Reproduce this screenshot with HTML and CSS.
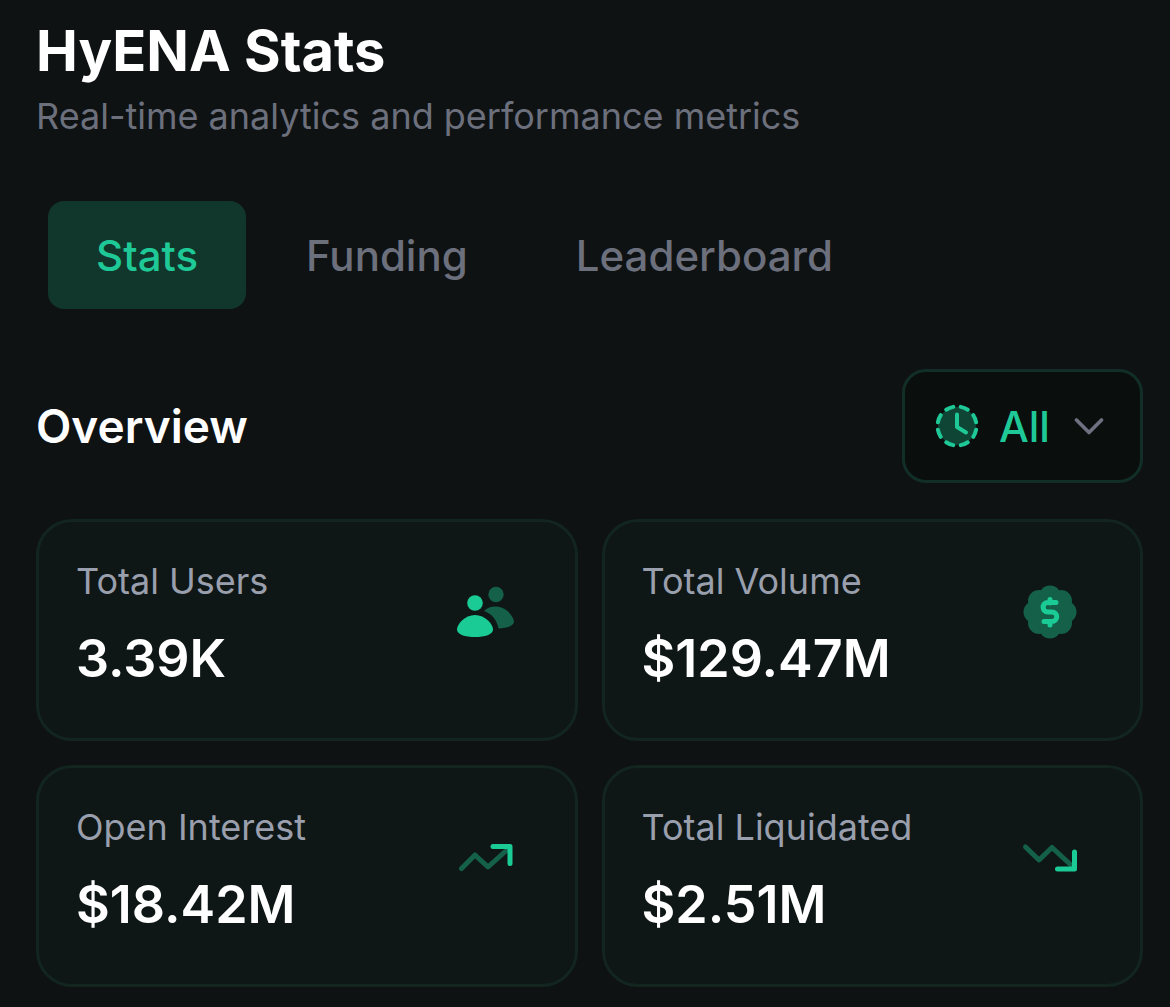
FILE: index.html
```html
<!DOCTYPE html>
<html lang="en">
  <head>
    <meta charset="UTF-8" />
    <meta name="viewport" content="width=device-width, initial-scale=1.0" />
    <title>HyENA Stats</title>
    <link rel="stylesheet" href="styles.css">
  </head>
  <body>
    <header class="page-header">
      <h1>HyENA Stats</h1>
      <p>Real-time analytics and performance metrics</p>
    </header>

    <nav class="tabs">
      <button class="tab active" type="button">Stats</button>
      <button class="tab" type="button">Funding</button>
      <button class="tab" type="button">Leaderboard</button>
    </nav>

    <main>
      <div class="section-header">
        <h2>Overview</h2>
        <label class="period">
          <svg class="period-icon" viewBox="0 0 44 44" aria-hidden="true">
            <circle cx="22" cy="22" r="19" fill="#0e4534" />
            <circle
              cx="22" cy="22" r="19.5" fill="none" stroke="#1fc997" stroke-width="4"
              stroke-linecap="round" pathLength="80" stroke-dasharray="5 5" stroke-dashoffset="-2.5"
            />
            <path d="M22 10.5V23l9 5.500" fill="none" stroke="#1fc997" stroke-width="4" stroke-linecap="round" stroke-linejoin="round" />
          </svg>
          <select aria-label="Time period">
            <option>All</option>
          </select>
          <svg class="period-arrow" viewBox="0 0 30 18" aria-hidden="true">
            <path d="M2.500 3l12.500 12.500L27.500 3" fill="none" stroke="#6f7180" stroke-width="3.600" stroke-linecap="round" stroke-linejoin="round" />
          </svg>
        </label>
      </div>

      <div class="cards">
        <div class="card">
          <div>
            <div class="card-label">Total Users</div>
            <div class="card-value">3.39K</div>
          </div>
          <svg class="card-icon" viewBox="0 0 60 60" aria-hidden="true">
            <circle cx="41" cy="14.500" r="7.700" fill="#146049" />
            <path d="M29 31C35 25 46 25 53 31.500C57 35.500 59 39.500 59 42C58 46.500 51 48.500 43.500 48.500C42 40.500 37 33.500 29 31Z" fill="#146049" />
            <circle cx="20" cy="23" r="7.800" fill="#1bcb95" />
            <path d="M20 35C30 35 38 44 38 49.500C38 54.500 30 57 20 57S2 54.500 2 49.500C2 44 10 35 20 35Z" fill="#1bcb95" />
          </svg>
        </div>

        <div class="card">
          <div>
            <div class="card-label">Total Volume</div>
            <div class="card-value">$129.47M</div>
          </div>
          <svg class="card-icon" viewBox="0 0 60 60" aria-hidden="true">
            <g fill="#146049">
              <circle cx="30" cy="32" r="21" />
              <circle cx="30" cy="16.500" r="11" />
              <circle cx="41" cy="21" r="11" />
              <circle cx="45.500" cy="32" r="11" />
              <circle cx="41" cy="43" r="11" />
              <circle cx="30" cy="47.500" r="11" />
              <circle cx="19" cy="43" r="11" />
              <circle cx="14.500" cy="32" r="11" />
              <circle cx="19" cy="21" r="11" />
            </g>
            <path
              d="M30 19.500V23M30 41.500V45M36 22.500H28C21.500 22.500 21.500 32 28 32H31.500C38.500 32 38.500 41.500 31.500 41.500H24"
              fill="none" stroke="#1bcb95" stroke-width="5" stroke-linecap="round" stroke-linejoin="round"
            />
          </svg>
        </div>

        <div class="card">
          <div>
            <div class="card-label">Open Interest</div>
            <div class="card-value">$18.42M</div>
          </div>
          <svg class="card-icon" viewBox="0 0 60 60" fill="none" stroke-width="5" stroke-linecap="round" stroke-linejoin="round" aria-hidden="true">
            <path d="M6.500 42.500L20 29L33 41L53 23" stroke="#146049" />
            <path d="M38 20.500H55V37.500" stroke="#1bcb95" />
          </svg>
        </div>

        <div class="card">
          <div>
            <div class="card-label">Total Liquidated</div>
            <div class="card-value">$2.51M</div>
          </div>
          <svg class="card-icon" viewBox="0 0 60 60" fill="none" stroke-width="5" stroke-linecap="round" stroke-linejoin="round" aria-hidden="true">
            <path d="M5.500 21L19 34L32 21.500L52 40" stroke="#146049" />
            <path d="M37.500 43H54.500V26" stroke="#1bcb95" />
          </svg>
        </div>
      </div>
    </main>
  </body>
</html>
```
FILE: styles.css
```css
* {
  box-sizing: border-box;
}

body {
  margin: 0;
  padding: 15px 27px 20px 36px;
  background-color: #0f1213;
  color: #fff;
  font-family: Inter, "Liberation Sans", sans-serif;
}

h1,
h2,
p {
  margin: 0;
}

.page-header h1 {
  font-size: 56px;
  font-weight: 700;
  line-height: 72px;
}

.page-header p {
  margin-top: 4px;
  font-size: 36px;
  line-height: 50px;
  color: #6c707d;
}

.tabs {
  display: flex;
  gap: 12px;
  padding: 0 12px;
  margin-top: 60px;
}

.tab {
  height: 108px;
  padding: 0 48px;
  border: none;
  border-radius: 16px;
  background: none;
  color: #6c707d;
  font-family: inherit;
  font-size: 42px;
  font-weight: 500;
  cursor: pointer;
}

.tab.active {
  background-color: #11362b;
  color: #1fc997;
}

.section-header {
  display: flex;
  justify-content: space-between;
  align-items: center;
  margin: 60px 0 36px;
}

.section-header h2 {
  font-size: 46px;
  font-weight: 600;
}

.period {
  display: flex;
  align-items: center;
  height: 114px;
  padding: 0 36px 0 30px;
  border: 3px solid #122f27;
  border-radius: 24px;
  background-color: #0a0e0d;
  cursor: pointer;
}

.period select {
  appearance: none;
  margin: 0 24px 0 20px;
  padding: 0;
  border: none;
  background: none;
  color: #1fc997;
  font-family: inherit;
  font-size: 42px;
  font-weight: 500;
  cursor: pointer;
}

.period-icon {
  width: 44px;
  height: 44px;
}

.period-arrow {
  width: 30px;
  height: 18px;
}

.cards {
  display: grid;
  grid-template-columns: 1fr 1fr;
  gap: 24px;
}

.card {
  display: flex;
  justify-content: space-between;
  padding: 34px 60px 46px 37px;
  border: 3px solid #12251f;
  border-radius: 36px;
  background-color: #0f1716;
}

.card-label {
  font-size: 36px;
  line-height: 50px;
  color: #9a9fad;
}

.card-value {
  margin-top: 20px;
  font-size: 52px;
  font-weight: 600;
  line-height: 66px;
}

.card-icon {
  width: 60px;
  height: 60px;
  margin-top: 24px;
  flex-shrink: 0;
}
```
